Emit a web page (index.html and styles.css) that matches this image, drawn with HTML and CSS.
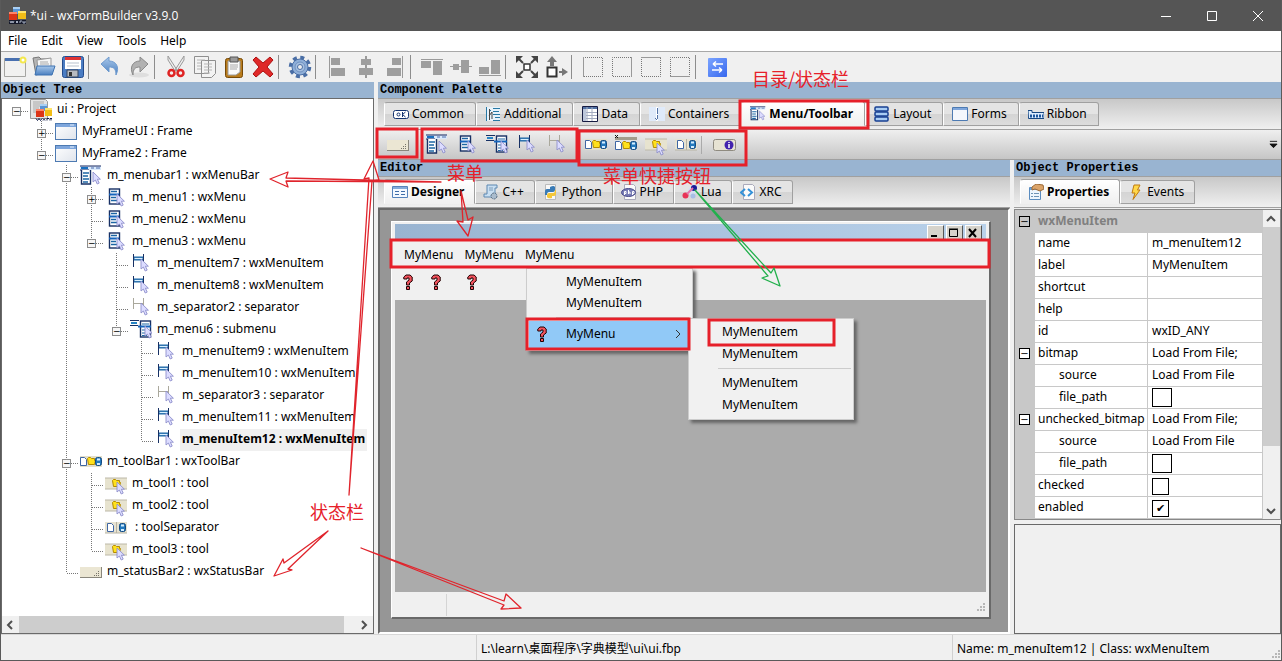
FILE: index.html
```html
<!DOCTYPE html>
<html lang="zh">
<head>
<meta charset="utf-8">
<title>*ui - wxFormBuilder v3.9.0</title>
<link rel="stylesheet" href="styles.css">
</head>
<body>
<svg class="sprite" aria-hidden="true">
  <defs>
    <linearGradient id="blueV" x1="0" y1="0" x2="0" y2="1"><stop offset="0" stop-color="#a9c8ea"/><stop offset="1" stop-color="#4a7fc0"/></linearGradient>
    <linearGradient id="paper" x1="0" y1="0" x2="1" y2="1"><stop offset="0" stop-color="#fff"/><stop offset="1" stop-color="#dfe4ec"/></linearGradient>
    <linearGradient id="swapG" x1="0" y1="0" x2="1" y2="1"><stop offset="0" stop-color="#7ba4ff"/><stop offset="1" stop-color="#3768ee"/></linearGradient>
    <path id="cur" d="M0 0v10l2.400-2 1.800 4 2-.9-1.800-3.900h3z" fill="#dcdcff" stroke="#8f90cc" stroke-width=".9"/>
    <g id="cubes"><path d="M4 0h7v7H4z" fill="#5b95d4"/><path d="M4 0h7v2H4z" fill="#a9d0f5"/><path d="M0 5h8v8H0z" fill="#dc3418"/><path d="M0 5h8v2H0z" fill="#ff8468"/><path d="M9 4h8v8H9z" fill="#f2bd16"/><path d="M9 4h8v2H9z" fill="#ffe46c"/></g>
    <g id="page"><path d="M.5.5h4l2 2v6h-6z" fill="#fff" stroke="#3f66a4"/></g>
    <g id="fold"><path d="M.5 2.500l1-1h2l1 1h3v2h1l-1 4h-6z" fill="#ffe11c" stroke="#b48a00"/></g>
    <g id="disk"><rect x=".5" y=".5" width="6" height="8" rx="2" fill="#2378bc" stroke="#134a82"/><path d="M2 1.500h3v2H2zM2 6h3v2H2z" fill="#d4edff"/></g>
  </defs>
  <symbol id="app" viewBox="0 0 18 18"><use href="#cubes"/><path d="M0 13h17v4H0z" fill="#15192a"/><path d="M1 14l1 2 1-2 1 2 1-2M7 14l2 2m0-2-2 2M11 16v-2h2m1 0v2h2v-2" stroke="#c8d2e4" stroke-width=".8" fill="none"/></symbol>
  <symbol id="project" viewBox="0 0 22 22"><path d="M.5.500h15l2 2v17H.5z" fill="#e4e4e4" stroke="#9b9b9b"/><path d="M3 3h11M3 5h11M3 7h11M3 9h6M3 11h4M3 13h4" stroke="#aaa"/><g transform="translate(6 5)"><use href="#cubes"/></g><path d="M6 19.500l1.500 2 1.500-2 1.500 2 1.500-2m1 0 2 2m0-2-2 2m4 0v-2h2m1 2v-2h2v2" stroke="#111a48" fill="none"/></symbol>
  <symbol id="frame" viewBox="0 0 22 22"><rect x=".5" y="2.500" width="21" height="16" fill="url(#paper)" stroke="#4d7ab2"/><path d="M1 3h20v3H1z" fill="#7ea6dc"/><path d="M15 4h4" stroke="#e4eefa"/></symbol>
  <symbol id="menubar" viewBox="0 0 22 22"><path d="M0 1h21v4H0z" fill="#d9e9fb"/><path d="M0 1h21M0 5h9" stroke="#16275e"/><path d="M1 3h7" stroke="#176fc0" stroke-width="2"/><path d="M11 3h3m2 0h4" stroke="#4c6dae"/><path d="M1.500 5v14h9V5" fill="#fff" stroke="#173064" stroke-width="1.400"/><path d="M3 8h6M3 11h5M3 14h6M3 17h5" stroke="#1d66a4" stroke-width="1.500"/><use href="#cur" x="13" y="7"/></symbol>
  <symbol id="menu" viewBox="0 0 22 22"><rect x="4.500" y="2" width="10" height="15" fill="#fff" stroke="#173064" stroke-width="1.400"/><path d="M6 4.500h6M6 10.500h5M6 13.500h6" stroke="#1d66a4" stroke-width="1.500"/><path d="M4 7.500h10" stroke="#1565bd" stroke-width="2"/><use href="#cur" x="12" y="7"/></symbol>
  <symbol id="item" viewBox="0 0 22 22"><path d="M3.500 1v13M13.500 1v8" stroke="#173064"/><path d="M4 5.500h9" stroke="#1f68a8" stroke-width="4"/><path d="M4.500 5.500h8" stroke="#d9f0ff" stroke-width="1.200"/><use href="#cur" x="11" y="6"/></symbol>
  <symbol id="sepitem" viewBox="0 0 22 22"><path d="M3.500 1v11M13.500 1v8M4 6.500h9" stroke="#aaa89c" fill="none"/><use href="#cur" x="11" y="6"/></symbol>
  <symbol id="submenu" viewBox="0 0 22 22"><path d="M0 1.500h9M0 6.500h8" stroke="#173064"/><path d="M1 4h6" stroke="#2683c4" stroke-width="2"/><rect x="10.500" y="2" width="10" height="16" fill="#fff" stroke="#173064" stroke-width="1.400"/><path d="M12 5h7M12 11h5M12 14h5M12 16.500h5" stroke="#1d66a4" stroke-width="1.200"/><path d="M8 7.500h13" stroke="#1565bd" stroke-width="2"/><use href="#cur" x="15" y="7"/></symbol>
  <symbol id="toolbar" viewBox="0 0 22 22"><path d="M0 5h22v11H0z" fill="#e3dfcb"/><use href="#page" y="6"/><use href="#fold" x="7" y="5"/><use href="#disk" x="15" y="6"/></symbol>
  <symbol id="tool" viewBox="0 0 22 22"><path d="M0 5h22v11H0z" fill="#e7e3cf"/><path d="M0 16h22M0 5h22" stroke="#bcb8a8"/><use href="#fold" x="7" y="5"/><use href="#cur" x="12" y="9"/></symbol>
  <symbol id="toolsep" viewBox="0 0 22 22"><path d="M0 5h22v11H0z" fill="#e7e3d2"/><path d="M11.500 5v11M0 16h22" stroke="#b7b3a4"/><use href="#page" x="2" y="6"/><use href="#disk" x="14" y="6"/></symbol>
  <symbol id="statusbar" viewBox="0 0 22 22"><path d="M0 6h22v10H0z" fill="#ebe6d3"/><path d="M0 16.500h22M21.500 6v10" stroke="#8a877c"/><path d="M18 14.500h1m-3 0h1m-3 0h1m1-2h1m1 0h1m-1-2h1" stroke="#77746a"/></symbol>
  <symbol id="info" viewBox="0 0 24 22"><rect x=".5" y="5.500" width="22" height="11" rx="2" fill="#e7e3d3" stroke="#8f8b80"/><circle cx="16" cy="11" r="4.500" fill="#4323ae"/><path d="M16 10v4M16 8v1" stroke="#fff" stroke-width="1.500"/></symbol>
  <symbol id="tbex" viewBox="0 0 22 22"><path d="M0 3h22v3H0z" fill="#a39d8c"/><path d="M0 1l3 3m0-3-3 3" stroke="#111"/><use href="#page" y="7"/><use href="#fold" x="7" y="6"/><use href="#disk" x="15" y="7"/></symbol>
  <symbol id="q" viewBox="0 0 10 16"><path d="M.8 5V3L3 1h4l2.200 2v4L6.500 9v2h-3V8L6 6V4H4v1zM3.500 12.500h3v3h-3z" fill="#f2525c" stroke="#220204" stroke-width="1"/></symbol>
</svg>

<header class="titlebar">
  <svg class="app-icon"><use href="#app"/></svg>
  <h1>*ui - wxFormBuilder v3.9.0</h1>
  <div class="win-buttons">
    <button aria-label="Minimize"><svg viewBox="0 0 12 12"><path d="M1 6.500h10"/></svg></button>
    <button aria-label="Maximize"><svg viewBox="0 0 12 12"><path d="M1.500 1.500h9v9h-9z"/></svg></button>
    <button aria-label="Close"><svg viewBox="0 0 12 12"><path d="M1 1l10 10M11 1L1 11"/></svg></button>
  </div>
</header>

<nav class="menubar"><button>File</button><button>Edit</button><button>View</button><button>Tools</button><button>Help</button></nav>

<div class="toolbar" role="toolbar" aria-label="Main">
  <button aria-label="New"><svg viewBox="0 0 24 24"><path d="M1.500 3.500h21v18h-21z" fill="#f1f1f0" stroke="#a5a5a2"/><path d="M2 3h20v3H2z" fill="#4870b0"/><circle cx="20" cy="5" r="3.500" fill="#f4e84e"/><circle cx="20" cy="5" r="1.500" fill="#fff"/></svg></button>
  <button aria-label="Open"><svg viewBox="0 0 24 24"><path d="M1 3l6-1 2 2h9v12L4 20z" fill="#b5b5b5" stroke="#777"/><path d="M5 5l14-2v12H6z" fill="#f6f6f6" stroke="#999"/><path d="M8 7h8M8 9h9" stroke="#aaa"/><path d="M5 11h18l-3 9H3z" fill="url(#blueV)" stroke="#3e73b2"/></svg></button>
  <button aria-label="Save"><svg viewBox="0 0 24 24"><rect x="1.500" y="1.500" width="21" height="21" rx="2" fill="#4b7dc3" stroke="#244c8d"/><path d="M4 2h16v12H4z" fill="#fff"/><path d="M4 2h16v3H4z" fill="#df3434"/><path d="M6 8h12M6 11h12" stroke="#b9c2cd"/><path d="M6 15h11v7H6z" fill="#b8bbc0" stroke="#34455f"/><path d="M8 17h3v4H8z" fill="#333"/></svg></button>
  <i></i>
  <button aria-label="Undo"><svg viewBox="0 0 24 24"><path d="M3 9l8-7v4c7 0 11 6 7 14 0-6-2-8-7-8v5z" fill="url(#blueV)" stroke="#6f9bcf"/></svg></button>
  <button aria-label="Redo"><svg viewBox="0 0 24 24"><ellipse cx="12" cy="20" rx="10" ry="2.500" fill="#dedede"/><path d="M21 9l-8-7v4C6 6 2 12 6 20c0-6 2-8 7-8v5z" fill="#b2b2b2" stroke="#8a8a8a"/></svg></button>
  <i></i>
  <button aria-label="Cut"><svg viewBox="0 0 24 24"><path d="M4 1l9 14-2 1L4 5zM20 1l-9 14 2 1 7-11z" fill="#eee" stroke="#999"/><circle cx="7.500" cy="18" r="3" fill="none" stroke="#df2424" stroke-width="2.500"/><circle cx="16.500" cy="18" r="3" fill="none" stroke="#df2424" stroke-width="2.500"/></svg></button>
  <button aria-label="Copy"><svg viewBox="0 0 24 24"><path d="M1.500 1.500h14v17h-14zM8.500 5.500h14v13l-4 4h-10z" fill="#f3f3f3" stroke="#8f8f8f"/><path d="M4 5h8M4 8h4M4 11h4M4 14h4M11 9h8M11 12h8M11 15h8M11 18h6" stroke="#b5b5b5"/></svg></button>
  <button aria-label="Paste"><svg viewBox="0 0 24 24"><rect x="3.500" y="3.500" width="17" height="19" rx="2" fill="#b97c1c" stroke="#774a08"/><path d="M6 6h12v11l-4 3H6z" fill="#fafafa" stroke="#9e9e9e"/><path d="M8 10h8M8 12h8M8 14h7" stroke="#a9a9a9"/><path d="M8 2h8v5H8z" fill="#999" stroke="#555"/></svg></button>
  <button aria-label="Delete"><svg viewBox="0 0 24 24"><path d="M5 2l7 6 7-6 3 3-6 7 6 7-3 3-7-6-7 6-3-3 6-7-6-7z" fill="#df2929" stroke="#ae1111"/></svg></button>
  <i></i>
  <button aria-label="Generate"><svg viewBox="0 0 24 24"><circle cx="12" cy="12" r="9.500" fill="none" stroke="#4a6ea5" stroke-width="3.500" stroke-dasharray="4 3.460"/><circle cx="12" cy="12" r="8" fill="#8fafd8" stroke="#4a6ea5"/><circle cx="12" cy="12" r="5" fill="#a5bfe0" stroke="#6f90c0"/><circle cx="12" cy="12" r="2.500" fill="#eee" stroke="#4a6ea5"/></svg></button>
  <i></i>
  <button aria-label="Align left"><svg viewBox="0 0 24 24"><path d="M4.500 1v22" stroke="#9a9a9a"/><path d="M6 3h9v7H6zM6 13h14v8H6z" fill="#9e9e9e"/></svg></button>
  <button aria-label="Align center"><svg viewBox="0 0 24 24"><path d="M12 1v22" stroke="#9a9a9a" stroke-width="2"/><path d="M7 4h10v6H7zM5 13h14v7H5z" fill="#9e9e9e"/></svg></button>
  <button aria-label="Align right"><svg viewBox="0 0 24 24"><path d="M19.500 1v22" stroke="#9a9a9a"/><path d="M9 3h9v7H9zM4 13h14v8H4z" fill="#9e9e9e"/></svg></button>
  <i></i>
  <button aria-label="Align top"><svg viewBox="0 0 24 24"><path d="M1 4.500h22" stroke="#9a9a9a"/><path d="M1 6h10v7H1zM13 6h9v14h-9z" fill="#9e9e9e"/></svg></button>
  <button aria-label="Align middle"><svg viewBox="0 0 24 24"><path d="M1 11.500h22" stroke="#9a9a9a"/><path d="M4 9h6v6H4zM12 5h8v13h-8z" fill="#9e9e9e"/></svg></button>
  <button aria-label="Align bottom"><svg viewBox="0 0 24 24"><path d="M1 20.500h22" stroke="#9a9a9a"/><path d="M1 12h10v7H1zM13 5h9v14h-9z" fill="#9e9e9e"/></svg></button>
  <i></i>
  <button aria-label="Expand"><svg viewBox="0 0 24 24"><path d="M9 9h6v6H9z" fill="#fff" stroke="#333" stroke-width="1.500"/><path d="M8 8L3 3M16 8l5-5M8 16l-5 5M16 16l5 5" stroke="#444" stroke-width="2"/><path d="M1 1h7L1 8zM23 1h-7l7 7zM1 23h7l-7-7zM23 23h-7l7-7z" fill="#444"/></svg></button>
  <button aria-label="Stretch"><svg viewBox="0 0 24 24"><path d="M3.500 12.500h9v9h-9z" fill="#fff" stroke="#333" stroke-width="2"/><path d="M8 1l5 6h-3v4H6V7H3zM24 17l-6-4v3h-3v2h3v3z" fill="#777"/></svg></button>
  <i></i>
  <button aria-label="Left border"><svg class="bd" viewBox="0 0 24 24"><path d="M2.500 2.500h19v19h-19z"/><path class="s" d="M2.500 2v20"/></svg></button>
  <button aria-label="Right border"><svg class="bd" viewBox="0 0 24 24"><path d="M2.500 2.500h19v19h-19z"/><path class="s" d="M21.500 2v20"/></svg></button>
  <button aria-label="Top border"><svg class="bd" viewBox="0 0 24 24"><path d="M2.500 2.500h19v19h-19z"/><path class="s" d="M2 2.500h20"/></svg></button>
  <button aria-label="Bottom border"><svg class="bd" viewBox="0 0 24 24"><path d="M2.500 2.500h19v19h-19z"/><path class="s" d="M2 21.500h20"/></svg></button>
  <i></i>
  <button aria-label="Swap"><svg viewBox="0 0 24 24"><rect x="3" y="3" width="19" height="19" rx="1" fill="url(#swapG)"/><path d="M8 9h10M8 9l3-2.500M8 9l3 2.500M7 15h10M17 15l-3-2.500M17 15l-3 2.500" stroke="#fff" stroke-width="1.500" fill="none"/></svg></button>
</div>

<main class="workspace">
  <section class="tree-pane">
    <h2 class="caption">Object Tree</h2>
    <div class="tree-box">
      <ul class="tree">
        <li><b class="l root"><button>−</button></b><svg><use href="#project"/></svg><span>ui : Project</span></li>
        <li><b></b><b class="t"><button>+</button></b><svg><use href="#frame"/></svg><span>MyFrameUI : Frame</span></li>
        <li><b></b><b class="l"><button>−</button></b><svg><use href="#frame"/></svg><span>MyFrame2 : Frame</span></li>
        <li><b></b><b></b><b class="t"><button>−</button></b><svg><use href="#menubar"/></svg><span>m_menubar1 : wxMenuBar</span></li>
        <li><b></b><b></b><b class="v"></b><b class="t"><button>+</button></b><svg><use href="#menu"/></svg><span>m_menu1 : wxMenu</span></li>
        <li><b></b><b></b><b class="v"></b><b class="t"></b><svg><use href="#menu"/></svg><span>m_menu2 : wxMenu</span></li>
        <li><b></b><b></b><b class="v"></b><b class="l"><button>−</button></b><svg><use href="#menu"/></svg><span>m_menu3 : wxMenu</span></li>
        <li><b></b><b></b><b class="v"></b><b></b><b class="t"></b><svg><use href="#item"/></svg><span>m_menuItem7 : wxMenuItem</span></li>
        <li><b></b><b></b><b class="v"></b><b></b><b class="t"></b><svg><use href="#item"/></svg><span>m_menuItem8 : wxMenuItem</span></li>
        <li><b></b><b></b><b class="v"></b><b></b><b class="t"></b><svg><use href="#sepitem"/></svg><span>m_separator2 : separator</span></li>
        <li><b></b><b></b><b class="v"></b><b></b><b class="l"><button>−</button></b><svg><use href="#submenu"/></svg><span>m_menu6 : submenu</span></li>
        <li><b></b><b></b><b class="v"></b><b></b><b></b><b class="t"></b><svg><use href="#item"/></svg><span>m_menuItem9 : wxMenuItem</span></li>
        <li><b></b><b></b><b class="v"></b><b></b><b></b><b class="t"></b><svg><use href="#item"/></svg><span>m_menuItem10 : wxMenuItem</span></li>
        <li><b></b><b></b><b class="v"></b><b></b><b></b><b class="t"></b><svg><use href="#sepitem"/></svg><span>m_separator3 : separator</span></li>
        <li><b></b><b></b><b class="v"></b><b></b><b></b><b class="t"></b><svg><use href="#item"/></svg><span>m_menuItem11 : wxMenuItem</span></li>
        <li class="selected"><b></b><b></b><b class="v"></b><b></b><b></b><b class="l"></b><svg><use href="#item"/></svg><span>m_menuItem12 : wxMenuItem</span></li>
        <li><b></b><b></b><b class="t"><button>−</button></b><svg><use href="#toolbar"/></svg><span>m_toolBar1 : wxToolBar</span></li>
        <li><b></b><b></b><b class="v"></b><b class="t"></b><svg><use href="#tool"/></svg><span>m_tool1 : tool</span></li>
        <li><b></b><b></b><b class="v"></b><b class="t"></b><svg><use href="#tool"/></svg><span>m_tool2 : tool</span></li>
        <li><b></b><b></b><b class="v"></b><b class="t"></b><svg><use href="#toolsep"/></svg><span>&nbsp;: toolSeparator</span></li>
        <li><b></b><b></b><b class="v"></b><b class="l"></b><svg><use href="#tool"/></svg><span>m_tool3 : tool</span></li>
        <li><b></b><b></b><b class="l"></b><svg><use href="#statusbar"/></svg><span>m_statusBar2 : wxStatusBar</span></li>
      </ul>
      <div class="hscroll">
        <button aria-label="Scroll left"><svg viewBox="0 0 16 16"><path d="M10 4L6 8l4 4"/></svg></button>
        <div class="thumb"></div>
        <button aria-label="Scroll right"><svg viewBox="0 0 16 16"><path d="M6 4l4 4-4 4"/></svg></button>
      </div>
    </div>
  </section>

  <div class="right-side">
    <section class="palette">
      <h2 class="caption">Component Palette</h2>
      <div class="tabs wide" role="tablist">
        <button role="tab"><svg viewBox="0 0 16 16"><rect x=".5" y="4.500" width="15" height="8" rx="2" fill="#fff" stroke="#14336f"/><circle cx="5.500" cy="8.500" r="1.500" fill="none" stroke="#14336f"/><path d="M9.500 6v5M12.500 6l-3 2.500 3 2.500" stroke="#14336f" fill="none"/></svg>Common</button>
        <button role="tab"><svg viewBox="0 0 16 16"><path d="M1 1h14v14H1z" fill="#e7f2fb"/><path d="M1.500 1v14M4 4.500h2M8 2.500h7M8 5.500h6M8 8.500h7M10 11.500h5M8 14.500h7" stroke="#2878a4"/><path d="M4.500 3v11M4 10l3-4v7" stroke="#444" fill="none"/></svg>Additional</button>
        <button role="tab"><svg viewBox="0 0 16 16"><path d="M.5.500h15v15H.5z" fill="#fff" stroke="#161b42"/><path d="M1 1h14v2H1z" fill="#5172a4"/><path d="M5 1v14M10 1v14M1 6.500h14M1 9.500h14M1 12.500h14" stroke="#a3abc0"/><path d="M1 3h3v12H1z" fill="#bdc7da"/></svg>Data</button>
        <button role="tab"><svg viewBox="0 0 16 16"><path d="M0 1h16v14H0z" fill="#dfeafa"/><path d="M7 1h2v14H7z" fill="#fff"/><path d="M8.500 2v6M8.500 9v4M6 12l2 2" stroke="#5373a7"/></svg>Containers</button>
        <button role="tab" class="on" aria-selected="true"><svg viewBox="0 0 22 22"><use href="#menubar"/></svg>Menu/Toolbar</button>
        <button role="tab"><svg viewBox="0 0 16 16"><g fill="#a9cdf4" stroke="#173f91" stroke-width="1.500"><rect x="1" y="1" width="13" height="4" rx="1"/><rect x="1" y="6" width="13" height="4" rx="1"/><rect x="1" y="11" width="13" height="4" rx="1"/></g></svg>Layout</button>
        <button role="tab"><svg viewBox="0 0 16 16"><path d="M.5 1.500h15v13H.5z" fill="#f4f7fc" stroke="#4d7ab2"/><path d="M1 2h14v2H1z" fill="#7ea6dc"/></svg>Forms</button>
        <button role="tab"><svg viewBox="0 0 16 16"><path d="M0 4.500h4v2h12v6H.5z" fill="#dcecff" stroke="#164782"/><path d="M2 10h2m1 0h2m1 0h2m1 0h2m1 0h1" stroke="#1b559d" stroke-width="3"/></svg>Ribbon</button>
      </div>
      <div class="component-bar" role="toolbar" aria-label="Components">
        <button aria-label="wxStatusBar"><svg><use href="#statusbar"/></svg></button>
        <i></i>
        <button aria-label="wxMenuBar"><svg><use href="#menubar"/></svg></button>
        <button aria-label="wxMenu"><svg><use href="#menu"/></svg></button>
        <button aria-label="submenu"><svg><use href="#submenu"/></svg></button>
        <button aria-label="wxMenuItem"><svg><use href="#item"/></svg></button>
        <button aria-label="separator"><svg><use href="#sepitem"/></svg></button>
        <i></i>
        <button aria-label="wxToolBar"><svg><use href="#toolbar"/></svg></button>
        <button aria-label="toolbar form"><svg><use href="#tbex"/></svg></button>
        <button aria-label="tool"><svg><use href="#tool"/></svg></button>
        <button aria-label="toolSeparator"><svg><use href="#toolsep"/></svg></button>
        <i class="line"></i>
        <button aria-label="wxInfoBar"><svg><use href="#info"/></svg></button>
        <button class="overflow" aria-label="More"><svg viewBox="0 0 10 10"><path d="M1 1.500h8M1 4.500h8l-4 4z" fill="#111" stroke="#111"/></svg></button>
      </div>
    </section>

    <div class="lower">
      <section class="editor">
        <h2 class="caption">Editor</h2>
        <div class="tabs" role="tablist">
          <button role="tab" class="on" aria-selected="true"><svg viewBox="0 0 16 16"><path d="M.5 2.500h15v11H.5z" fill="#f4f9ff" stroke="#5683bb"/><path d="M1 3h14v2H1z" fill="#84abd9"/><path d="M3 7.500h4M3 10.500h4M9 7.500h4M9 10.500h4" stroke="#3f6da8"/></svg>Designer</button>
          <button role="tab"><svg viewBox="0 0 16 16"><path d="M4 1h10v3h-2v9H1v-3h3z" fill="#c9dff2" stroke="#5c88b1"/><path d="M6 4h4M6 6h4" stroke="#7d9cb9"/><circle cx="11" cy="12" r="3" fill="#aabccd" stroke="#566d83" stroke-dasharray="2 1"/></svg>C++</button>
          <button role="tab"><svg viewBox="0 0 16 16"><path d="M2.500.500h10v15h-10z" fill="#f8f8f8" stroke="#bbb"/><path d="M2 11V7q0-2 2-2h3V3q4-2 5 0v3q0 2-2 2H6q-2 0-2 3z" fill="#397bb6"/><path d="M13 6v4q0 2-2 2H9v2q-4 1-5-1v-2q0-2 2-2h4q2 0 2-3z" fill="#f4c739"/></svg>Python</button>
          <button role="tab"><svg viewBox="0 0 16 16"><path d="M3.500.500h9l2 2v13h-11z" fill="#fafafa" stroke="#aab"/><ellipse cx="7.500" cy="8.500" rx="7" ry="4" fill="#777bb5" stroke="#4b4d8c"/><path d="M3.500 11V7.500h1.500v2H4M7.500 6v4M9 10V8H7.500M11.500 11V7.500H13v2h-1.500" stroke="#fff" fill="none"/></svg>PHP</button>
          <button role="tab"><svg viewBox="0 0 16 16"><circle cx="10" cy="7" r="4" fill="#d6e0f0"/><circle cx="12" cy="4" r="3" fill="#171b9b"/><circle cx="3.500" cy="11.500" r="3" fill="#e83456"/><circle cx="11" cy="12" r="2.500" fill="#a7bde5"/><path d="M5 10l6-6" stroke="#e774a9" stroke-width="2"/></svg>Lua</button>
          <button role="tab"><svg viewBox="0 0 16 16"><path d="M3.500.500h9l2 2v13h-11z" fill="#fafafa" stroke="#aab"/><path d="M5 5L1 8.500 5 12M8 5l4 3.500L8 12" stroke="#3491d8" stroke-width="2" fill="none"/></svg>XRC</button>
        </div>
        <div class="canvas">
          <div class="form">
            <div class="form-title">
              <button aria-label="Minimize form"><svg viewBox="0 0 14 12"><path d="M3 9h6"/></svg></button>
              <button aria-label="Maximize form"><svg viewBox="0 0 14 12"><path class="thin" d="M2.500 2.500h8v7h-8zM2 2h9"/></svg></button>
              <button aria-label="Close form"><svg viewBox="0 0 14 12"><path d="M3 2l7 8M10 2l-7 8"/></svg></button>
            </div>
            <div class="form-menu"><button>MyMenu</button><button>MyMenu</button><button>MyMenu</button></div>
            <div class="form-tools">
              <button aria-label="m_tool1"><svg><use href="#q"/></svg></button>
              <button aria-label="m_tool2"><svg><use href="#q"/></svg></button>
              <i></i>
              <button aria-label="m_tool3"><svg><use href="#q"/></svg></button>
            </div>
            <div class="form-body"></div>
            <div class="form-status"><span></span><svg class="grip" viewBox="0 0 10 10"><path d="M7 0h2v2H7zM4 3h2v2H4zM7 3h2v2H7zM1 6h2v2H1zM4 6h2v2H4zM7 6h2v2H7z"/></svg></div>
            <div class="popup first" role="menu">
              <button role="menuitem">MyMenuItem</button>
              <button role="menuitem">MyMenuItem</button>
              <hr>
              <button role="menuitem" class="hot"><svg class="q"><use href="#q"/></svg><span>MyMenu</span><svg class="chev" viewBox="0 0 6 10"><path d="M1 1l4 4-4 4"/></svg></button>
            </div>
            <div class="popup second" role="menu">
              <button role="menuitem">MyMenuItem</button>
              <button role="menuitem">MyMenuItem</button>
              <hr>
              <button role="menuitem">MyMenuItem</button>
              <button role="menuitem">MyMenuItem</button>
            </div>
          </div>
        </div>
      </section>

      <section class="props">
        <h2 class="caption">Object Properties</h2>
        <div class="tabs" role="tablist">
          <button role="tab" class="on" aria-selected="true"><svg viewBox="0 0 16 16"><path d="M1.500 3.500h11v12h-11z" fill="#eef5fd" stroke="#5a8cc0"/><path d="M2 4h10v2H2z" fill="#6fa4dc"/><path d="M3 9.500h2m1 0h5M3 12.500h2m1 0h5" stroke="#6f93b5"/><path d="M4 3l4-3 7 1 1 4-4 2-5-2-3 1z" fill="#dca469" stroke="#9b6a37"/></svg>Properties</button>
          <button role="tab"><svg viewBox="0 0 16 16"><path d="M6 1h6L9.500 6H12L5 15.500 7 9H4z" fill="#ffd84a" stroke="#c07a10"/></svg>Events</button>
        </div>
        <div class="grid-box">
          <table class="grid">
            <tr class="cat"><th class="m"><button>−</button></th><th class="name" colspan="2">wxMenuItem</th></tr>
            <tr><th class="m"></th><th>name</th><td>m_menuItem12</td></tr>
            <tr><th class="m"></th><th>label</th><td>MyMenuItem</td></tr>
            <tr><th class="m"></th><th>shortcut</th><td></td></tr>
            <tr><th class="m"></th><th>help</th><td></td></tr>
            <tr><th class="m"></th><th>id</th><td>wxID_ANY</td></tr>
            <tr><th class="m"><button>−</button></th><th>bitmap</th><td>Load From File;</td></tr>
            <tr><th class="m"></th><th class="sub">source</th><td>Load From File</td></tr>
            <tr><th class="m"></th><th class="sub">file_path</th><td><input type="checkbox" class="big" aria-label="bitmap file_path"></td></tr>
            <tr><th class="m"><button>−</button></th><th>unchecked_bitmap</th><td>Load From File;</td></tr>
            <tr><th class="m"></th><th class="sub">source</th><td>Load From File</td></tr>
            <tr><th class="m"></th><th class="sub">file_path</th><td><input type="checkbox" class="big" aria-label="unchecked_bitmap file_path"></td></tr>
            <tr><th class="m"></th><th><label for="checked">checked</label></th><td><input type="checkbox" id="checked"></td></tr>
            <tr><th class="m"></th><th><label for="enabled">enabled</label></th><td><input type="checkbox" id="enabled" checked></td></tr>
          </table>
          <div class="vscroll">
            <button aria-label="Scroll up"><svg viewBox="0 0 16 16"><path d="M4 10l4-4 4 4"/></svg></button>
            <div class="thumb"></div>
            <button aria-label="Scroll down"><svg viewBox="0 0 16 16"><path d="M4 6l4 4 4-4"/></svg></button>
          </div>
        </div>
        <div class="help-box"></div>
      </section>
    </div>
  </div>
</main>

<footer class="statusbar">
  <span></span>
  <span>L:\learn\桌面程序\字典模型\ui\ui.fbp</span>
  <span>Name: m_menuItem12 | Class: wxMenuItem</span>
  <svg class="grip" viewBox="0 0 10 10"><path d="M7 0h2v2H7zM4 3h2v2H4zM7 3h2v2H7zM1 6h2v2H1zM4 6h2v2H4zM7 6h2v2H7z"/></svg>
</footer>

<svg class="notes" viewBox="0 0 1282 661" width="1282" height="661">
  <g class="boxes">
    <rect x="377" y="129" width="40" height="28"/>
    <rect x="422" y="129" width="155" height="32"/>
    <rect x="579" y="131" width="167" height="34"/>
    <rect x="740" y="101" width="128" height="27"/>
    <rect x="391" y="240" width="598" height="27"/>
    <rect x="527" y="319" width="162" height="30"/>
    <rect x="709" y="320" width="125" height="25"/>
  </g>
  <g class="arrows">
    <path d="M441 182L286 178l2-6-18 7 18 8-2-6z"/>
    <path d="M461 191l2 31-6-1 11 15 5-19-5 3z"/>
    <path d="M349 495l20-317-5 1 9-18 6 19-7 1z"/>
    <path d="M328 531l-44 32-1-4-9 17 18-6-4-1z"/>
    <path d="M361 548l143 53 2-7 15 14-20 1 3-4z"/>
    <path class="green" d="M695 190l73 86-6 2 18 8-6-18-3 5z"/>
  </g>
  <g class="words">
    <text x="752" y="86">目录/状态栏</text>
    <text x="447" y="180">菜单</text>
    <text x="603" y="183">菜单快捷按钮</text>
    <text x="310" y="519">状态栏</text>
  </g>
</svg>
</body>
</html>
```

FILE: styles.css
```css
* { box-sizing: border-box; }
body {
  margin: 0;
  min-height: 100vh;
  display: flex;
  flex-direction: column;
  position: relative;
  background: #f0f0f0;
  color: #000;
  font: 12px/22px "Noto Sans", "Noto Sans CJK SC", sans-serif;
  border: 1px solid #5a5a5a;
  border-width: 0 1px 1px;
  overflow: hidden;
}
button {
  margin: 0;
  padding: 0;
  border: 0;
  background: none;
  color: inherit;
  font: inherit;
}
h1, h2 { margin: 0; font-weight: normal; }
svg { display: block; flex: none; }
.sprite { position: absolute; width: 0; height: 0; }

.titlebar {
  height: 31px;
  display: flex;
  align-items: center;
  background: #555;
  color: #fff;
}
.app-icon { width: 18px; height: 18px; margin: 0 3px 0 8px; }
.titlebar h1 { flex: 1; font: 12px/22px "Open Sans", sans-serif; }
.win-buttons { display: flex; }
.win-buttons button { width: 46px; height: 31px; display: grid; place-items: center; }
.win-buttons svg { width: 12px; height: 12px; fill: none; stroke: #fff; }

.menubar {
  height: 21px;
  display: flex;
  padding-left: 7px;
  gap: 14px;
  background: #fff;
  border-bottom: 1px solid #a8a8a8;
}
.menubar button { line-height: 20px; }

.toolbar { height: 30px; display: flex; align-items: center; }
.toolbar button { width: 29px; height: 24px; padding: 0 2px; }
.toolbar svg { width: 24px; height: 24px; }
.toolbar i { width: 8px; height: 24px; border-left: 1px solid #8d8d8d; border-right: 7px solid transparent; }
.bd path { fill: none; stroke: #777; stroke-dasharray: 1 1; stroke-dashoffset: .5; }
.bd .s { stroke-dasharray: none; stroke: #999; }

.workspace { flex: 1; display: flex; gap: 4px; }
.caption {
  height: 16px;
  padding-left: 2px;
  background: #99b4d1;
  font: bold 12px/16px "Liberation Mono", monospace;
}

.tree-pane { width: 373px; display: flex; flex-direction: column; }
.tree-box {
  flex: 1;
  display: flex;
  flex-direction: column;
  border: 1px solid #6a6a6a;
  background: #fff;
}
.tree { flex: 1; margin: 0; padding: 0 0 0 2px; list-style: none; }
.tree li { height: 22px; display: flex; align-items: center; white-space: nowrap; }
.tree b { width: 25px; height: 22px; display: flex; position: relative; }
.tree b::before { content: ""; width: 1px; height: 22px; margin-left: 12px; }
.tree b::after { content: ""; flex: 1; height: 1px; margin-top: 12px; }
.tree .v::before, .tree .t::before, .tree .l::before {
  background: repeating-linear-gradient(#777 0 1px, transparent 1px 2px);
}
.tree .l::before { height: 12px; }
.tree .root::before { background: none; }
.tree .t::after, .tree .l::after {
  background: repeating-linear-gradient(90deg, #777 0 1px, transparent 1px 2px);
}
.tree b button {
  position: absolute;
  left: 8px;
  top: 8px;
  width: 9px;
  height: 9px;
  border: 1px solid #8d8d8d;
  background: #f6f6f6;
  font: 9px/7px "DejaVu Sans", sans-serif;
}
.tree svg { width: 22px; height: 22px; margin-left: 1px; }
.tree span { padding: 0 2px 2px; margin-left: 3px; line-height: 20px; }
.selected span { background: #f0f0f0; font-weight: bold; }

.hscroll { height: 17px; display: flex; background: #f0f0f0; }
.hscroll button, .vscroll button { width: 17px; height: 17px; }
.hscroll svg, .vscroll svg { width: 16px; height: 16px; fill: none; stroke: #505050; stroke-width: 2; }
.hscroll .thumb { flex: 1; margin-right: 12px; background: #cdcdcd; }

.right-side { flex: 1; min-width: 0; display: flex; flex-direction: column; }
.tabs {
  height: 32px;
  display: flex;
  align-items: flex-end;
  padding: 0 0 3px 6px;
  border-top: 1px solid #a0a0a0;
  border-bottom: 1px solid #a0a0a0;
  background: linear-gradient(#c8c8c8, #f0f0f0);
}
.tabs button {
  height: 24px;
  display: flex;
  align-items: center;
  gap: 3px;
  padding: 0 10px 0 7px;
  border: 1px solid #a0a0a0;
  border-left-color: #fff;
  border-radius: 3px 3px 0 0;
  background: linear-gradient(#e4e4e4 50%, #d4d4d4 50%, #dcdcdc);
  white-space: nowrap;
}
.wide button { padding: 0 11px 0 8px; }
.tabs .on { height: 25px; background: linear-gradient(#fff, #f0f0f0); font-weight: bold; border-bottom-color: #f0f0f0; }
.tabs svg { width: 16px; height: 16px; }

.component-bar {
  height: 30px;
  display: flex;
  align-items: center;
  padding-left: 5px;
  background: linear-gradient(#efefef, #c6c6c6);
  border-bottom: 1px solid #a0a0a0;
}
.component-bar button { width: 30px; height: 24px; padding: 0 3px; }
.component-bar svg { width: 24px; height: 22px; }
.component-bar i { width: 9px; height: 18px; }
.component-bar .line { border-left: 1px solid #aaa; }
.component-bar .overflow { width: 16px; margin-left: auto; display: grid; place-items: center; }
.component-bar .overflow svg { width: 9px; height: 9px; }

.lower { flex: 1; display: flex; gap: 4px; }
.editor { flex: 1; display: flex; flex-direction: column; }
.canvas {
  flex: 1;
  display: flex;
  padding: 11px 17px 13px 11px;
  background: #969696;
  border: 2px solid #696969;
  border-color: #696969 #fff #fff #696969;
}
.form {
  flex: 1;
  display: flex;
  flex-direction: column;
  position: relative;
  padding: 2px 3px 1px;
  background: #f0f0f0;
  border: 1px solid #fff;
  border-right: 2px solid #696969;
  border-bottom: 2px solid #696969;
}
.form-title {
  height: 16px;
  display: flex;
  justify-content: flex-end;
  gap: 2px;
  padding: 1px 4px 0 0;
  background: linear-gradient(90deg, #99b4d1, #b9d1ea);
}
.form-title button {
  width: 17px;
  height: 15px;
  background: #d6d3cb;
  border: 1px solid #fff;
  border-right-color: #555;
  border-bottom-color: #555;
}
.form-title svg { width: 14px; height: 12px; fill: none; stroke: #000; stroke-width: 2; }
.form-title .thin { stroke-width: 1; }
.form-menu { height: 28px; display: flex; gap: 11px; padding: 4px 9px; }
.form-tools { height: 32px; display: flex; align-items: flex-start; padding: 6px 0 0 8px; gap: 18px; }
.form-tools i { width: 0; margin-right: -10px; }
.form-tools svg, .q { width: 10px; height: 16px; }
.form-body { flex: 1; background: #ababab; }
.form-status { height: 24px; display: flex; justify-content: space-between; align-items: flex-end; }
.form-status span { width: 52px; height: 22px; border-right: 1px solid #d4d4d4; }
.grip { width: 10px; height: 10px; fill: #b7b7b7; }
.form-status .grip { margin-bottom: 3px; }

.popup {
  position: absolute;
  padding: 2px;
  background: #f1f1f1;
  border: 1px solid #ccc;
  box-shadow: 3px 3px 3px #666;
  display: flex;
  flex-direction: column;
}
.popup.first { left: 134px; top: 46px; width: 167px; height: 83px; }
.popup.second { left: 296px; top: 96px; width: 166px; height: 102px; }
.popup button { height: 22px; text-align: left; padding: 0 0 0 37px; line-height: 20px; }
.popup.second button { padding-left: 31px; }
.popup hr { width: 133px; height: 1px; margin: 3px 0 3px 27px; border: 0; background: #ccc; }
.popup .hot {
  height: 28px;
  display: flex;
  align-items: center;
  padding: 0 9px 0 8px;
  background: #91c9f7;
}
.hot span { flex: 1; margin-left: 19px; }
.chev { width: 6px; height: 10px; fill: none; stroke: #333; }

.props { width: 267px; display: flex; flex-direction: column; }
.grid-box { margin-top: 1px; display: flex; border: 1px solid #888; background: #c8c8c8; }
.grid { flex: 1; table-layout: fixed; border-collapse: collapse; }
.grid tr { height: 22px; }
.grid th, .grid td {
  height: 22px;
  padding: 0 4px 1px;
  background: #fff;
  border: 1px solid #c8c8c8;
  text-align: left;
  font-weight: normal;
  line-height: 20px;
  white-space: nowrap;
}
.grid th { padding-left: 3px; padding-right: 0; }
.grid th:nth-child(2) { width: 113px; }
.grid .m { width: 19px; background: #c8c8c8; }
.grid .cat th { background: #c8c8c8; color: #808080; font-weight: bold; }
.grid th.sub { padding-left: 24px; }
.m button { display: block; width: 11px; height: 11px; border: 1px solid #000; background: #fff; color: #000; font: 10px/9px "DejaVu Sans", sans-serif; }
.cat .m button { background: #c8c8c8; }
.grid input {
  appearance: none;
  display: grid;
  place-items: center;
  width: 17px;
  height: 17px;
  margin: 2px 0 0;
  border: 1px solid #000;
  background: #fff;
}
.grid .big { width: 20px; height: 19px; margin-top: 1px; }
.grid input:checked::before { content: "✔"; font: 11px/15px "DejaVu Sans", sans-serif; }
.vscroll { width: 17px; display: flex; flex-direction: column; background: #f0f0f0; }
.vscroll .thumb { flex: 1; margin-bottom: 56px; background: #cdcdcd; }
.help-box { flex: 1; margin-top: 4px; border: 1px solid #696969; }

.statusbar { height: 26px; display: flex; position: relative; border-top: 1px solid #d7d7d7; }
.statusbar span { width: 476px; padding: 3px 4px 0; border-right: 1px solid #d0d0d0; white-space: nowrap; }
.statusbar span:nth-child(3) { flex: 1; border: 0; }
.statusbar .grip { align-self: flex-end; }

.notes { position: absolute; left: -1px; top: 0; pointer-events: none; }
.boxes rect { fill: none; stroke: #e6202a; stroke-width: 3; }
.arrows path { fill: none; stroke: #e0242c; stroke-width: 1.3; stroke-linejoin: round; }
.arrows .green { stroke: #22b04c; }
.words { fill: #e6202a; font: 18px "Noto Sans CJK SC", sans-serif; }
```
